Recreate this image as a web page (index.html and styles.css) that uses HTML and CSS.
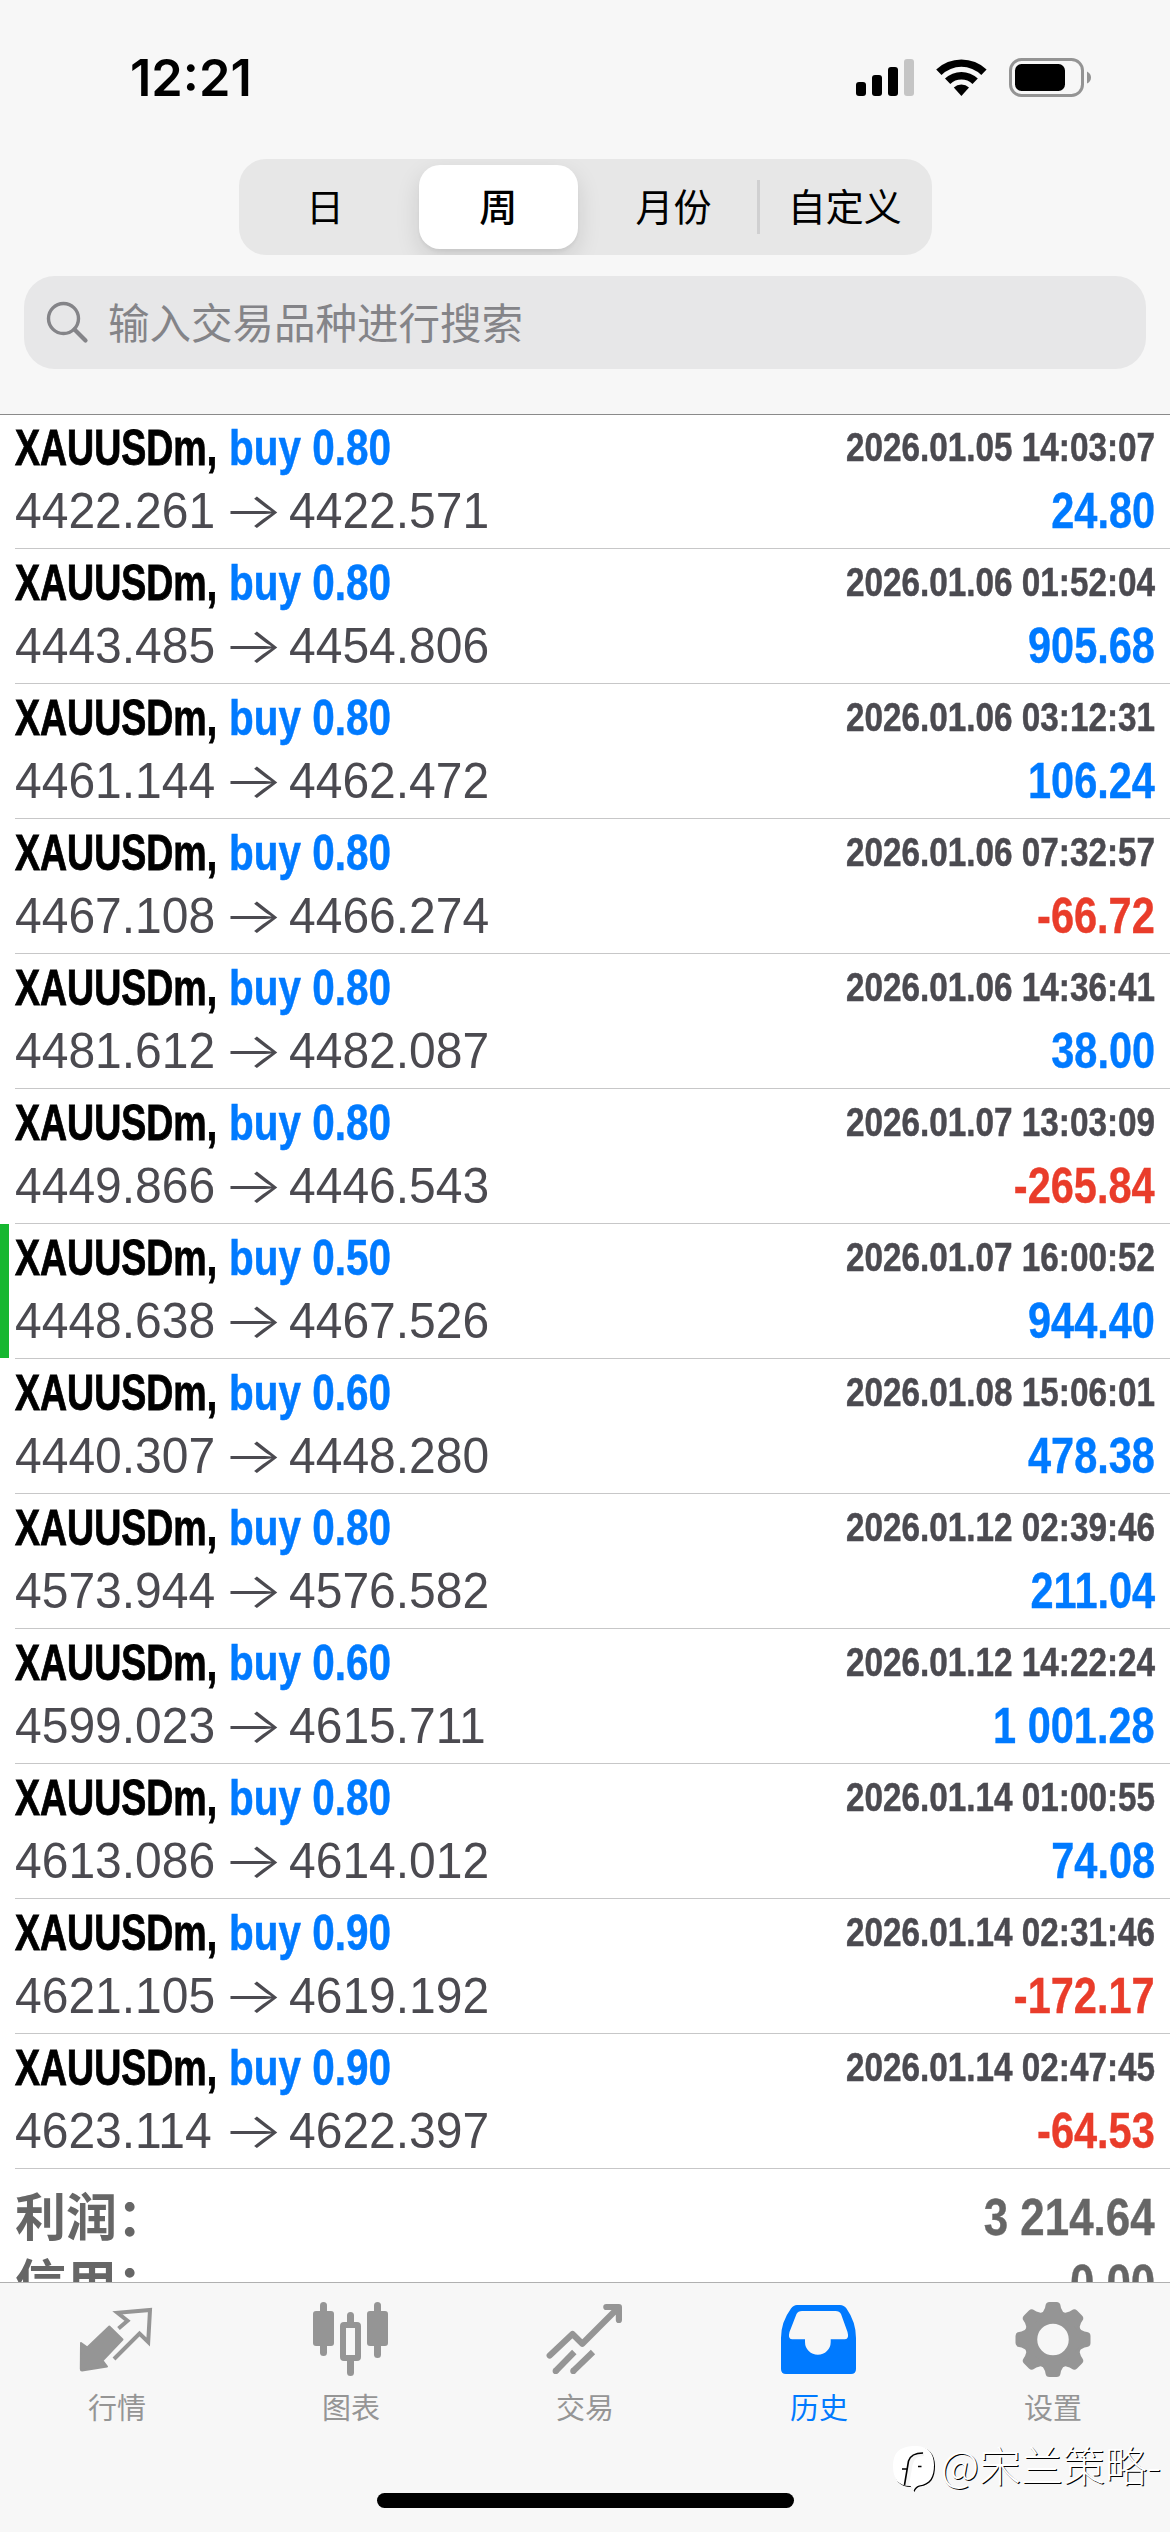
FILE: index.html
```
<!DOCTYPE html>
<html lang="zh-CN">
<head>
<meta charset="utf-8">
<title>历史</title>
<link rel="stylesheet" href="styles.css">
</head>
<body>
<div class="screen">
  <header class="header">
    <div class="status">
      <span class="clock">12:21</span>
      <svg class="status-icons" viewBox="856 56 236 44" width="236" height="44">
        <rect x="856" y="82" width="10" height="14" rx="3"/>
        <rect x="872" y="75" width="10" height="21" rx="3"/>
        <rect x="888" y="67" width="10" height="29" rx="3"/>
        <rect x="904" y="59" width="10" height="37" rx="3" fill="#c5c5c5"/>
        <path d="M936.200 69.500A36.500 36.500 0 0 1 986.600 69.500L981.300 74.900A28.500 28.500 0 0 0 941.500 74.900Z"/>
        <path d="M945 78.500A23.800 23.800 0 0 1 977.800 78.500L972.500 83.900A16 16 0 0 0 950.300 83.900Z"/>
        <path d="M953.800 87.500A11 11 0 0 1 969 87.500L961.400 96Z"/>
        <rect x="1010.500" y="59.500" width="72" height="36" rx="11" fill="none" stroke="#949494" stroke-width="3"/>
        <rect x="1015" y="64" width="50" height="27" rx="6.500"/>
        <path d="M1087 71.500Q1091 73.500 1091 77.500T1087 83.500Z" fill="#949494"/>
      </svg>
    </div>
    <nav class="segments">
      <span class="segment">日</span>
      <span class="segment segment-on">周</span>
      <span class="segment">月份</span>
      <span class="segment segment-divided">自定义</span>
    </nav>
    <div class="search">
      <svg viewBox="0 0 44 44" width="44" height="44" fill="none" stroke="#848488" stroke-linecap="round">
        <circle cx="17.500" cy="17.500" r="15" stroke-width="3.400"/>
        <path d="M28.500 28.500L39.500 39.500" stroke-width="4.200"/>
      </svg>
      <span>输入交易品种进行搜索</span>
    </div>
  </header>

  <main class="history">
    <ul class="trades">
      <li class="trade"><div class="line"><span class="symbol">XAUUSDm,</span><span class="order">buy 0.80</span><time>2026.01.05 14:03:07</time></div><div class="line"><span class="price">4422.261</span><span class="arrow">→</span><span class="price">4422.571</span><b class="profit">24.80</b></div></li>
      <li class="trade"><div class="line"><span class="symbol">XAUUSDm,</span><span class="order">buy 0.80</span><time>2026.01.06 01:52:04</time></div><div class="line"><span class="price">4443.485</span><span class="arrow">→</span><span class="price">4454.806</span><b class="profit">905.68</b></div></li>
      <li class="trade"><div class="line"><span class="symbol">XAUUSDm,</span><span class="order">buy 0.80</span><time>2026.01.06 03:12:31</time></div><div class="line"><span class="price">4461.144</span><span class="arrow">→</span><span class="price">4462.472</span><b class="profit">106.24</b></div></li>
      <li class="trade"><div class="line"><span class="symbol">XAUUSDm,</span><span class="order">buy 0.80</span><time>2026.01.06 07:32:57</time></div><div class="line"><span class="price">4467.108</span><span class="arrow">→</span><span class="price">4466.274</span><b class="profit loss">-66.72</b></div></li>
      <li class="trade"><div class="line"><span class="symbol">XAUUSDm,</span><span class="order">buy 0.80</span><time>2026.01.06 14:36:41</time></div><div class="line"><span class="price">4481.612</span><span class="arrow">→</span><span class="price">4482.087</span><b class="profit">38.00</b></div></li>
      <li class="trade"><div class="line"><span class="symbol">XAUUSDm,</span><span class="order">buy 0.80</span><time>2026.01.07 13:03:09</time></div><div class="line"><span class="price">4449.866</span><span class="arrow">→</span><span class="price">4446.543</span><b class="profit loss">-265.84</b></div></li>
      <li class="trade trade-marked"><div class="line"><span class="symbol">XAUUSDm,</span><span class="order">buy 0.50</span><time>2026.01.07 16:00:52</time></div><div class="line"><span class="price">4448.638</span><span class="arrow">→</span><span class="price">4467.526</span><b class="profit">944.40</b></div></li>
      <li class="trade"><div class="line"><span class="symbol">XAUUSDm,</span><span class="order">buy 0.60</span><time>2026.01.08 15:06:01</time></div><div class="line"><span class="price">4440.307</span><span class="arrow">→</span><span class="price">4448.280</span><b class="profit">478.38</b></div></li>
      <li class="trade"><div class="line"><span class="symbol">XAUUSDm,</span><span class="order">buy 0.80</span><time>2026.01.12 02:39:46</time></div><div class="line"><span class="price">4573.944</span><span class="arrow">→</span><span class="price">4576.582</span><b class="profit">211.04</b></div></li>
      <li class="trade"><div class="line"><span class="symbol">XAUUSDm,</span><span class="order">buy 0.60</span><time>2026.01.12 14:22:24</time></div><div class="line"><span class="price">4599.023</span><span class="arrow">→</span><span class="price">4615.711</span><b class="profit">1 001.28</b></div></li>
      <li class="trade"><div class="line"><span class="symbol">XAUUSDm,</span><span class="order">buy 0.80</span><time>2026.01.14 01:00:55</time></div><div class="line"><span class="price">4613.086</span><span class="arrow">→</span><span class="price">4614.012</span><b class="profit">74.08</b></div></li>
      <li class="trade"><div class="line"><span class="symbol">XAUUSDm,</span><span class="order">buy 0.90</span><time>2026.01.14 02:31:46</time></div><div class="line"><span class="price">4621.105</span><span class="arrow">→</span><span class="price">4619.192</span><b class="profit loss">-172.17</b></div></li>
      <li class="trade"><div class="line"><span class="symbol">XAUUSDm,</span><span class="order">buy 0.90</span><time>2026.01.14 02:47:45</time></div><div class="line"><span class="price">4623.114</span><span class="arrow">→</span><span class="price">4622.397</span><b class="profit loss">-64.53</b></div></li>
    </ul>
    <div class="totals">
      <div class="total"><span class="total-name">利润：</span><b class="total-value">3 214.64</b></div>
      <div class="total"><span class="total-name">信用：</span><b class="total-value">0.00</b></div>
    </div>
  </main>

  <footer class="tabbar">
    <nav class="tabs">
      <span class="tab">
        <svg viewBox="78 2300 78 78" width="78" height="78">
          <path d="M81 2343L87.300 2347.500L109.300 2326.500L122.500 2339.500L102.500 2360.500L107 2366.500L82 2370.500Q80.800 2370.500 80.800 2369Z" fill="currentColor" stroke="currentColor" stroke-width="2" stroke-linejoin="round"/>
          <path d="M118.500 2328.500L127.500 2320.700L117.500 2312.800L150 2310L148.200 2342L139.500 2333.500L114 2359" fill="none" stroke="currentColor" stroke-width="4"/>
        </svg>
        行情
      </span>
      <span class="tab">
        <svg viewBox="312 2300 78 78" width="78" height="78" fill="currentColor">
          <rect x="313" y="2311" width="21" height="35" rx="3"/><rect x="320" y="2302" width="7" height="54" rx="3.500"/>
          <rect x="367" y="2311" width="21" height="35" rx="3"/><rect x="374" y="2302" width="7" height="56" rx="3.500"/>
          <rect x="343" y="2325" width="15" height="33" rx="1" fill="none" stroke="currentColor" stroke-width="6"/>
          <path d="M347 2323V2315.500a3.500 3.500 0 0 1 7 0V2323ZM347 2360V2372.500a3.500 3.500 0 0 0 7 0V2360Z"/>
        </svg>
        图表
      </span>
      <span class="tab">
        <svg viewBox="546 2300 78 78" width="78" height="78" fill="none" stroke="currentColor" stroke-width="6.200" stroke-linejoin="round">
          <path d="M549.700 2355.500L572.500 2334L582.300 2343.700L618.500 2307.500M606.300 2307H618.900V2320" stroke-linecap="round"/>
          <path d="M555.700 2371L574.300 2352M573.300 2371L593 2352"/>
          <path d="M555.700 2371h.010M573.300 2371h.010" stroke-linecap="round"/>
        </svg>
        交易
      </span>
      <span class="tab tab-on">
        <svg viewBox="780 2300 78 78" width="78" height="78">
          <path fill="currentColor" fill-rule="evenodd" d="M797 2305H840Q844 2305 846.500 2308.500Q856 2322 856 2338V2369Q856 2374 851 2374H786Q781 2374 781 2369V2338Q781 2322 791 2308.500Q793.500 2305 797 2305ZM802 2311Q798 2311 796.500 2314L789.500 2332Q787.500 2339.300 792 2339.300H805V2342A12.800 12.800 0 0 0 830.700 2342V2339.300H845Q849.500 2339.300 847.500 2332L841 2314Q839.500 2311 835.500 2311Z"/>
        </svg>
        历史
      </span>
      <span class="tab">
        <svg viewBox="-39 -39.500 78 78" width="78" height="78" fill="currentColor">
          <defs><path id="tooth" d="M-13 -24Q-9.500 -27.500 -8 -31.500L-7.500 -34Q-7 -37.500 -3.500 -37.500H3.500Q7 -37.500 7.500 -34L8 -31.500Q9.500 -27.500 13 -24Z"/></defs>
          <circle r="22.500" fill="none" stroke="currentColor" stroke-width="13.500"/>
          <use href="#tooth"/><use href="#tooth" transform="rotate(45)"/><use href="#tooth" transform="rotate(90)"/><use href="#tooth" transform="rotate(135)"/><use href="#tooth" transform="rotate(180)"/><use href="#tooth" transform="rotate(225)"/><use href="#tooth" transform="rotate(270)"/><use href="#tooth" transform="rotate(315)"/>
        </svg>
        设置
      </span>
    </nav>
    <div class="home"></div>
  </footer>

  <div class="watermark">
    <svg viewBox="0 0 44 50" width="44" height="50">
      <path class="badge" d="M20 1C34 0 41 7 41 20C41 32 37 39 26 40.500Q22 41.500 20.500 46L17.500 41C5 41 0 34 0 21C0 8 6 2 20 1Z" fill="#fff"/>
      <path d="M14 40L17.500 20Q19.500 9 31 9" fill="none" stroke="#f5f5f5" stroke-width="4"/>
      <path d="M11.500 40L15.500 16Q18 8 30 8M9 24H14M25 21.500H28.500" fill="none" stroke="#000" stroke-width="1.600"/>
    </svg>
    <span>@宋兰策略-</span>
  </div>
</div>
</body>
</html>
```
FILE: styles.css
```
* { box-sizing: border-box; }
body { margin: 0; background: #fff; }
.screen {
  position: relative;
  display: flex;
  flex-direction: column;
  width: 1170px;
  height: 2532px;
  overflow: hidden;
  font-family: "Liberation Sans", "Noto Sans CJK SC", sans-serif;
  color: #000;
}

/* header */
.header {
  flex: none;
  display: flex;
  flex-direction: column;
  align-items: center;
  height: 415px;
  background: #f7f7f7;
  border-bottom: 1px solid #8a8a8a;
}
.status {
  display: flex;
  justify-content: space-between;
  align-items: center;
  width: 100%;
  height: 159px;
  padding: 0 78px 3px 130px;
}
.clock { font: 600 50.500px/60px Inter, sans-serif; }
.segments {
  display: grid;
  grid-template-columns: repeat(4, 1fr);
  width: 693px;
  height: 96px;
  border-radius: 27px;
  background: #e7e7e7;
  overflow: hidden;
}
.segment {
  position: relative;
  display: flex;
  align-items: center;
  justify-content: center;
  padding-bottom: 4px;
  font: 400 38px/92px "Noto Sans CJK SC", sans-serif;
}
.segment:nth-child(3) { padding-left: 4px; }
.segment-on {
  margin: 6px 7px;
  font-weight: 500;
  line-height: 80px;
  border-radius: 21px;
  background: #fff;
  box-shadow: 0 9px 24px rgba(0, 0, 0, .12), 0 3px 3px rgba(0, 0, 0, .04);
}
.segment-divided::before {
  content: "";
  position: absolute;
  left: -1px;
  top: 21px;
  width: 3px;
  height: 54px;
  background: #d0d0d1;
}
.search {
  display: flex;
  align-items: center;
  gap: 18px;
  width: 1122px;
  height: 93px;
  margin-top: 21px;
  padding-left: 22px;
  border-radius: 31px;
  background: #e7e7e8;
  color: #848488;
  font: 400 41.500px/90px "Noto Sans CJK SC", sans-serif;
}
.search span { padding-bottom: 3px; }

/* trades */
.history { flex: 1; min-height: 0; overflow: hidden; }
.trades { margin: 0; padding: 0; list-style: none; }
.trade {
  position: relative;
  height: 135px;
  margin-left: 15px;
  padding: 3px 15px 0 0;
  border-bottom: 1px solid #c7c7c8;
}
.trade:first-child { height: 134px; padding-top: 2px; }
.trade-marked::before {
  content: "";
  position: absolute;
  left: -15px;
  top: 0;
  width: 9px;
  height: 134px;
  background: #16b730;
}
.line { display: flex; height: 63px; line-height: 63px; font-size: 50px; white-space: nowrap; }
.symbol, .order, .price { transform-origin: left; }
.symbol { width: 214px; font-weight: 700; transform: scaleX(.75); -webkit-text-stroke: .9px; }
.order { font-weight: 700; color: #007aff; transform: scaleX(.81); -webkit-text-stroke: .5px; }
.price { width: 214px; color: #4b4a50; transform: scaleX(.96); }
.arrow { width: 60px; color: #4b4a50; font: 300 50px/60px Inter, sans-serif; text-align: center; transform: translateX(-6px) scaleX(1.28); }
time, .profit { margin-left: auto; font-weight: 700; transform-origin: right; }
time { font-size: 40.500px; line-height: 61px; color: #4b4a50; transform: scaleX(.822); -webkit-text-stroke: .5px; }
.profit { color: #007aff; transform: scaleX(.83); -webkit-text-stroke: .4px; }
.loss { color: #e93c2a; }

/* totals */
.totals { padding: 16px 15px 0; color: #666; }
.total { display: flex; justify-content: space-between; height: 66px; line-height: 66px; }
.total-name { font: 700 51px/58px "Noto Sans CJK SC", sans-serif; }
.total-value { font-size: 51px; transform: scaleX(.86); transform-origin: right; -webkit-text-stroke: .4px; }

/* tab bar */
.tabbar {
  flex: none;
  display: flex;
  flex-direction: column;
  align-items: center;
  justify-content: space-between;
  height: 250px;
  padding-bottom: 24px;
  background: #f7f7f7;
  border-top: 1px solid #b0b0b0;
}
.tabs { display: grid; grid-template-columns: repeat(5, 1fr); width: 100%; padding-top: 17px; }
.tab {
  display: flex;
  flex-direction: column;
  align-items: center;
  gap: 7px;
  color: #959595;
  font: 400 29px/42px "Noto Sans CJK SC", sans-serif;
}
.tab-on { color: #007aff; }
.home { width: 417px; height: 15px; border-radius: 8px; background: #000; }

/* account mark over the tab bar */
.watermark {
  position: absolute;
  right: 9px;
  bottom: 37px;
  display: flex;
  align-items: flex-start;
  gap: 4px;
  color: #fff;
  font: 300 42px/38px "Noto Sans CJK SC", sans-serif;
  text-shadow: 1px 1px .5px #000;
}
.badge { filter: drop-shadow(1.500px 1px 0 #000); }
```
